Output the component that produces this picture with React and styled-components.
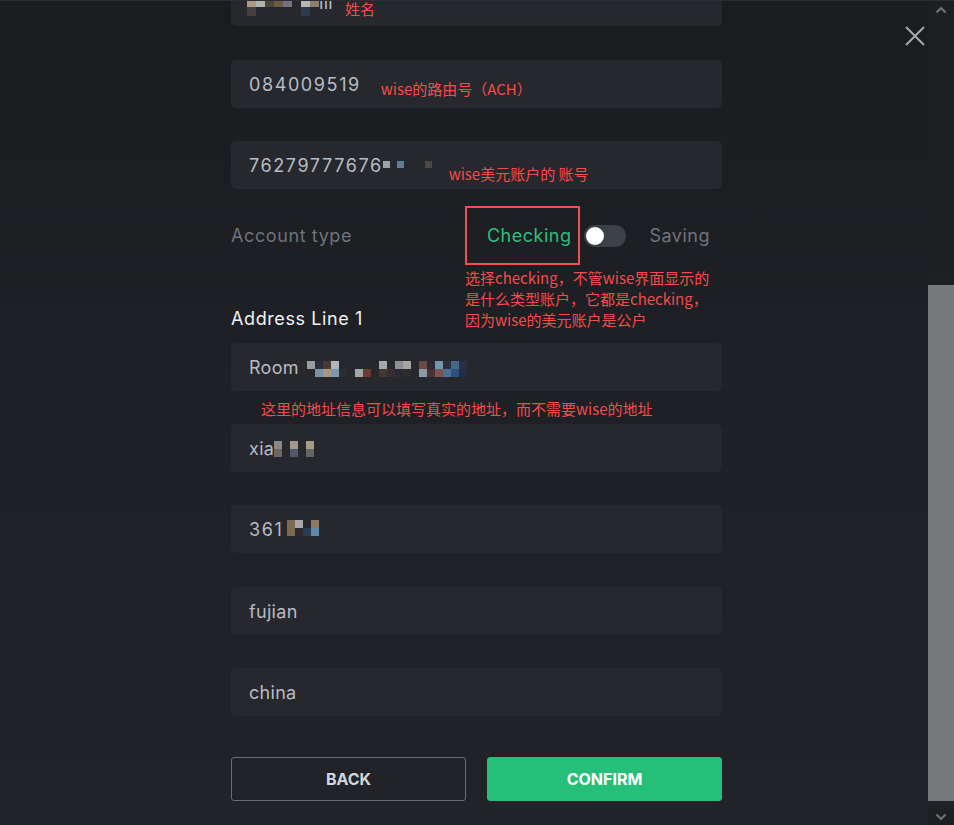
import React from 'react';
import styled, { createGlobalStyle } from 'styled-components';

const GlobalStyle = createGlobalStyle`
    html, body {
        margin: 0;
        padding: 0;
        background: #1d1f24;
    }
    * {
        box-sizing: border-box;
    }
    `

const Page = styled.div`
    display: flex;
    width: 100%;
    height: 825px;
    overflow: hidden;
    font-family: Inter, "Noto Sans", sans-serif;
    border-top: 1px solid #2b2e34;
    `

const Main = styled.div`
    flex: 1;
    position: relative;
    background: linear-gradient(180deg, #1a1c20 0%, #1e2025 45%, #212328 100%);
    `

const CloseButton = styled.button`
    position: absolute;
    top: 24px;
    right: 2px;
    width: 22px;
    height: 22px;
    padding: 0;
    border: none;
    background: transparent;
    cursor: pointer;
    display: flex;
    align-items: center;
    justify-content: center;
    `

const Form = styled.div`
    width: 491px;
    margin-left: 231px;
    margin-top: -23px;
    display: flex;
    flex-direction: column;
    `

const Field = styled.div`
    display: flex;
    align-items: center;
    height: 48px;
    padding: 0 18px;
    border-radius: 5px;
    background: #26282d;
    color: #b8bcc3;
    font-size: 18px;
    letter-spacing: ${props => props.$digits ? '1.6px' : '0.3px'};
    margin-top: ${props => props.$gap || 0}px;
    `

const Note = styled.span`
    color: #f54b4b;
    font-family: "Noto Sans CJK SC", "Noto Sans", sans-serif;
    font-size: 15px;
    letter-spacing: 0;
    line-height: 21px;
    margin-left: ${props => props.$left || 0}px;
    margin-top: ${props => props.$down || 0}px;
    `

const Mosaic = styled.span`
    display: inline-grid;
    grid-auto-flow: column;
    grid-template-rows: repeat(${props => props.$rows}, ${props => props.$cell}px);
    grid-auto-columns: ${props => props.$cell}px;
    margin-left: ${props => props.$left || 0}px;
    margin-top: ${props => props.$down || 0}px;
    `

const Cell = styled.span`
    background: ${props => props.$c || 'transparent'};
    `

const AccountRow = styled.div`
    display: flex;
    align-items: center;
    justify-content: space-between;
    margin-top: 17px;
    height: 59px;
    `

const Label = styled.span`
    color: ${props => props.$light ? '#f1f2f4' : '#6f737a'};
    font-size: 18px;
    line-height: 22px;
    letter-spacing: 0.6px;
    `

const Switcher = styled.div`
    display: flex;
    align-items: center;
    margin-right: 12px;
    `

const Highlight = styled.div`
    display: flex;
    align-items: center;
    height: 59px;
    padding: 0 7px 0 20px;
    border: 2px solid #f0504f;
    color: #2ebf7b;
    font-size: 18px;
    letter-spacing: 0.5px;
    `

const Toggle = styled.div`
    display: flex;
    align-items: center;
    width: 42px;
    height: 22px;
    margin-left: 4px;
    padding: 0 2px;
    border-radius: 11px;
    background: #3c4047;
    `

const Knob = styled.div`
    width: 18px;
    height: 18px;
    border-radius: 50%;
    background: #ffffff;
    `

const Saving = styled.span`
    margin-left: 23px;
    color: #6f737a;
    font-size: 18px;
    letter-spacing: 0.5px;
    `

const AddressHead = styled.div`
    display: grid;
    grid-template-columns: 234px 1fr;
    align-items: end;
    margin-top: 2px;
    `

const NoteBlock = styled.div`
    display: flex;
    flex-direction: column;
    color: #f54b4b;
    font-family: "Noto Sans CJK SC", "Noto Sans", sans-serif;
    font-size: 15px;
    line-height: 21px;
    `

const NoteGap = styled.div`
    height: 33px;
    display: flex;
    align-items: center;
    padding-left: 30px;
    padding-top: 1px;
    `

const Buttons = styled.div`
    display: flex;
    justify-content: space-between;
    margin-top: 41px;
    `

const Button = styled.button`
    width: 235px;
    height: 44px;
    border-radius: 3px;
    font-family: Inter, "Noto Sans", sans-serif;
    font-size: 16px;
    font-weight: 700;
    cursor: pointer;
    border: 1px solid ${props => props.$primary ? '#26bf7a' : '#6a6d72'};
    background: ${props => props.$primary ? '#26bf7a' : 'transparent'};
    color: ${props => props.$primary ? '#ffffff' : '#d3d6db'};
    `

const Scrollbar = styled.div`
    width: 26px;
    display: flex;
    flex-direction: column;
    background: #1d1f23;
    `

const Arrow = styled.div`
    height: 17px;
    display: flex;
    align-items: center;
    justify-content: center;
    `

const Track = styled.div`
    flex: 1;
    display: flex;
    flex-direction: column;
    background: linear-gradient(180deg, #1c1e22 0%, #202227 100%);
    `

const Thumb = styled.div`
    margin-top: 267px;
    height: 516px;
    background: #77787c;
    `

const Chevron = ({ up }) => (
    <svg width="12" height="8" viewBox="0 0 12 8">
        <path d={up ? 'M1.5 6.5 L6 2 L10.5 6.5' : 'M1.5 1.5 L6 6 L10.5 1.5'} fill="none" stroke="#6e7075" strokeWidth="2.2" />
    </svg>
)

const Pixels = ({ cols, cell = 8, left, down }) => (
    <Mosaic $rows={cols[0].length} $cell={cell} $left={left} $down={down}>
        {cols.flat().map((c, i) => <Cell key={i} $c={c} />)}
    </Mosaic>
)

const nameCols = [
    ['#a89a84', '#473f3c'], ['#b0b3ab', null], ['#4b4439', null], ['#6c5b40', null], ['#756e85', null],
    [null, null], ['#b9b9b4', '#2d3a4d'], ['#8a7d6b', null],
]

const accountCols = [['#9aa3a8'], [null], ['#5d7d99'], [null], [null], [null], ['#4e4640']]

const roomCols = [
    ['#9a9aa0', null], ['#2a2d3d', '#7793a8'], ['#4a3a33', '#a7987f'], ['#b3b5b8', '#7899b0'],
    [null, '#2b2e33'], [null, null], [null, '#9fa8a6'], [null, '#6e3a2c'], [null, null],
    ['#a5aaad', '#403b2c'], [null, '#3a2c30'], ['#8e9094', '#262a31'], ['#a9a6a2', '#2d2d2b'],
    [null, null], ['#6b4a44', '#8d9aa5'], ['#2a2a33', '#4a3034'], ['#7597ad', '#7a5450'],
    ['#2e2f39', '#4d6f95'], ['#46688a', '#28537a'], ['#2a2f45', '#262b45'],
]

const xiaCols = [['#8a8886', '#6b6663'], [null, null], ['#a09a8d', '#525a6a'], [null, null], ['#a89d85', '#67655f']]

const zipCols = [['#7c6a52', '#7c6a52'], ['#a6a8aa', '#2d2b2e'], [null, '#2a3d55'], ['#8a7a62', '#5f87a8']]

const App = () => {
    return (
        <>
            <GlobalStyle />
            <Page>
                <Main>
                    <CloseButton aria-label="close">
                        <svg width="20" height="20" viewBox="0 0 20 20">
                            <path d="M1 1 L19 19 M19 1 L1 19" stroke="#a7aaaf" strokeWidth="2" />
                        </svg>
                    </CloseButton>
                    <Form>
                        <Field>
                            <Pixels cols={nameCols} cell={9} left={-2} down={10} />
                            <span>ıll</span>
                            <Note $left={12} $down={12}>姓名</Note>
                        </Field>
                        <Field $digits $gap={34}>
                            084009519
                            <Note $left={20} $down={8}>wise的路由号（ACH）</Note>
                        </Field>
                        <Field $digits $gap={33}>
                            76279777676
                            <Pixels cols={accountCols} cell={7} left={0} down={-2} />
                            <Note $left={17} $down={16}>wise美元账户的 账号</Note>
                        </Field>
                        <AccountRow>
                            <Label>Account type</Label>
                            <Switcher>
                                <Highlight>Checking</Highlight>
                                <Toggle><Knob /></Toggle>
                                <Saving>Saving</Saving>
                            </Switcher>
                        </AccountRow>
                        <AddressHead>
                            <Label $light>Address Line 1</Label>
                            <NoteBlock>
                                <span>选择checking，不管wise界面显示的</span>
                                <span>是什么类型账户，它都是checking，</span>
                                <span>因为wise的美元账户是公户</span>
                            </NoteBlock>
                        </AddressHead>
                        <Field $gap={13}>
                            Room
                            <Pixels cols={roomCols} left={8} down={4} />
                        </Field>
                        <NoteGap>
                            <Note>这里的地址信息可以填写真实的地址，而不需要wise的地址</Note>
                        </NoteGap>
                        <Field>
                            xia
                            <Pixels cols={xiaCols} left={0} down={2} />
                        </Field>
                        <Field $digits $gap={33}>
                            361
                            <Pixels cols={zipCols} left={4} down={-2} />
                        </Field>
                        <Field $gap={34}>fujian</Field>
                        <Field $gap={33}>china</Field>
                        <Buttons>
                            <Button>BACK</Button>
                            <Button $primary>CONFIRM</Button>
                        </Buttons>
                    </Form>
                </Main>
                <Scrollbar>
                    <Arrow><Chevron up /></Arrow>
                    <Track>
                        <Thumb />
                    </Track>
                    <Arrow><Chevron /></Arrow>
                </Scrollbar>
            </Page>
        </>
    )
}

export default App;
